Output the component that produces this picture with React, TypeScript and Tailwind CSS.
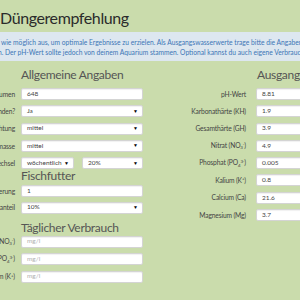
type Row = { label: React.ReactNode; value?: string; placeholder?: string; select?: boolean };

function Field({ value, placeholder, select, className = "w-[122px]" }: { value?: string; placeholder?: string; select?: boolean; className?: string }) {
  return (
    <div
      className={`${className} h-[12px] shrink-0 bg-white border border-[#d4d4d4] rounded-[2px] shadow-[inset_0_1px_1px_rgba(0,0,0,0.06)] flex items-center pl-[5px] pr-[4px] text-[6.5px] leading-none`}
    >
      <span className={`flex-1 ${value ? "text-[#444]" : "text-[#b0b0b0]"}`}>{value ?? placeholder}</span>
      {select && <span className="text-[5px] text-black">▼</span>}
    </div>
  );
}

function Heading({ children, className = "" }: { children: React.ReactNode; className?: string }) {
  return <div className={`h-[16px] leading-[16px] text-[12px] tracking-[-0.3px] text-[#555] whitespace-nowrap ${className}`}>{children}</div>;
}

function FormRow({ label, children, labelWidth = "w-[100px]", gap = "gap-[6px]" }: { label: React.ReactNode; children: React.ReactNode; labelWidth?: string; gap?: string }) {
  return (
    <div className={`flex items-center ${gap} h-[12px]`}>
      <div className={`${labelWidth} shrink-0 text-right text-[6.7px] tracking-[-0.15px] leading-none text-[#444] whitespace-nowrap`}>{label}</div>
      {children}
    </div>
  );
}

const sub = "text-[4.5px] leading-none";

const LEFT_GENERAL: Row[] = [
  { label: "Beckenvolumen", value: "648" },
  { label: "CO2-Anlage vorhanden?", value: "Ja", select: true },
  { label: "Beleuchtung", value: "mittel", select: true },
  { label: "Pflanzenmasse", value: "mittel", select: true },
];

const RIGHT_VALUES: Row[] = [
  { label: "pH-Wert", value: "8.81" },
  { label: "Karbonathärte (KH)", value: "1.9" },
  { label: "Gesamthärte (GH)", value: "3.9" },
  { label: <>Nitrat (NO<sub className={sub}>3</sub><sup className={sub}>-</sup>)</>, value: "4.9" },
  { label: <>Phosphat (PO<sub className={sub}>4</sub><sup className={sub}>3-</sup>)</>, value: "0.005" },
  { label: <>Kalium (K<sup className={sub}>+</sup>)</>, value: "0.8" },
  { label: "Calcium (Ca)", value: "21.6" },
  { label: "Magnesium (Mg)", value: "3.7" },
];

const USAGE: Row[] = [
  { label: <>Nitrat (NO<sub className={sub}>3</sub><sup className={sub}>-</sup>)</>, placeholder: "mg/l" },
  { label: <>Phosphat (PO<sub className={sub}>4</sub><sup className={sub}>3-</sup>)</>, placeholder: "mg/l" },
  { label: <>Kalium (K<sup className={sub}>+</sup>)</>, placeholder: "mg/l" },
];

export default function App() {
  return (
    <div className="w-[300px] h-[300px] overflow-hidden bg-[#cadcac] font-['Lato',sans-serif]">
      <header className="h-[32px] flex items-center">
        <h1 className="text-[16px] tracking-[-0.4px] leading-none text-[#2b2b2b] pt-[3px] whitespace-nowrap">Düngerempfehlung</h1>
      </header>

      <div className="bg-[#dde7f0] h-[29px] py-[5px] text-[6.7px] leading-[10px] text-[#3c76b6] whitespace-nowrap overflow-hidden">
        <div className="pl-[1px]">wie möglich aus, um optimale Ergebnisse zu erzielen. Als Ausgangswasserwerte trage bitte die Angaben deines Wasserversorgers ein.</div>
        <div className="-ml-[2px]">n. Der pH-Wert sollte jedoch von deinem Aquarium stammen. Optional kannst du auch eigene Verbrauchswerte angeben.</div>
      </div>

      <div className="flex -ml-[85px] mt-[6px]">
        <div className="w-[234px] shrink-0">
          <Heading className="pl-[106px]">Allgemeine Angaben</Heading>
          <div className="flex flex-col gap-[5.3px] mt-[5px]">
            {LEFT_GENERAL.map((r, i) => (
              <FormRow key={i} label={r.label}>
                <Field value={r.value} select={r.select} />
              </FormRow>
            ))}
            <FormRow label="Wasserwechsel">
              <div className="flex gap-[8px]">
                <Field value="wöchentlich" select className="w-[53px]" />
                <Field value="20%" select className="w-[61px]" />
              </div>
            </FormRow>
          </div>

          <Heading className="pl-[106px] -mt-[1px]">Fischfutter</Heading>
          <div className="flex flex-col gap-[4.5px] mt-[1px]">
            <FormRow label="Fütterung">
              <Field value="1" />
            </FormRow>
            <FormRow label="Futteranteil">
              <Field value="10%" select />
            </FormRow>
          </div>

          <Heading className="pl-[106px] mt-[6px]">Täglicher Verbrauch</Heading>
          <div className="flex flex-col gap-[5.5px] mt-[0px]">
            {USAGE.map((r, i) => (
              <FormRow key={i} label={r.label}>
                <Field placeholder={r.placeholder} />
              </FormRow>
            ))}
          </div>
        </div>

        <div className="shrink-0">
          <Heading className="pl-[108px]">Ausgangswasser</Heading>
          <div className="flex flex-col gap-[5.3px] mt-[5px]">
            {RIGHT_VALUES.map((r, i) => (
              <FormRow key={i} label={r.label} labelWidth="w-[97px]" gap="gap-[10px]">
                <Field value={r.value} />
              </FormRow>
            ))}
          </div>
        </div>
      </div>
    </div>
  );
}
